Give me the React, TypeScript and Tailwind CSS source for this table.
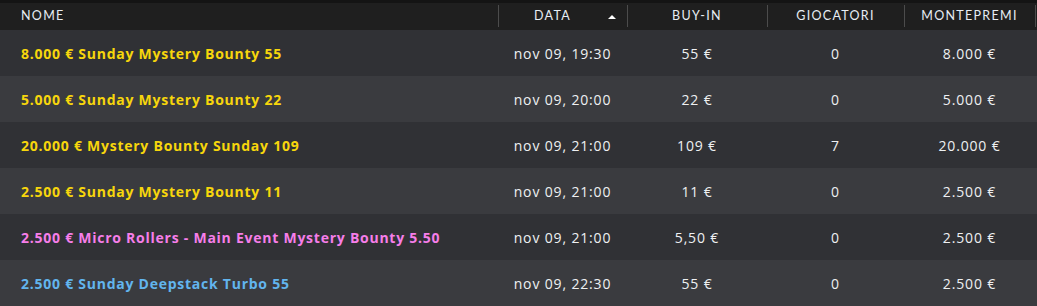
import React from 'react'

type Row = {
  name: string
  color: string
  date: string
  buyIn: string
  players: string
  prize: string
}

const rows: Row[] = [
  { name: '8.000 € Sunday Mystery Bounty 55', color: 'text-[#f7d60c]', date: 'nov 09, 19:30', buyIn: '55 €', players: '0', prize: '8.000 €' },
  { name: '5.000 € Sunday Mystery Bounty 22', color: 'text-[#f7d60c]', date: 'nov 09, 20:00', buyIn: '22 €', players: '0', prize: '5.000 €' },
  { name: '20.000 € Mystery Bounty Sunday 109', color: 'text-[#f7d60c]', date: 'nov 09, 21:00', buyIn: '109 €', players: '7', prize: '20.000 €' },
  { name: '2.500 € Sunday Mystery Bounty 11', color: 'text-[#f7d60c]', date: 'nov 09, 21:00', buyIn: '11 €', players: '0', prize: '2.500 €' },
  { name: '2.500 € Micro Rollers - Main Event Mystery Bounty 5.50', color: 'text-[#f67ee9]', date: 'nov 09, 21:00', buyIn: '5,50 €', players: '0', prize: '2.500 €' },
  { name: '2.500 € Sunday Deepstack Turbo 55', color: 'text-[#62b5ee]', date: 'nov 09, 22:30', buyIn: '55 €', players: '0', prize: '2.500 €' },
]

const cols = 'grid grid-cols-[498px_129px_140px_137px_131px_1fr]'

const HeadCell = ({ label, sep = true, children }: { label: string; sep?: boolean; children?: React.ReactNode }) => (
  <div className="relative flex h-full items-center justify-center">
    {sep && <span className="absolute left-0 top-[2px] h-[22px] w-px bg-[#4c4c4c]" />}
    <span>{label}</span>
    {children}
  </div>
)

export default function App() {
  return (
    <div className="h-[306px] w-[1037px] overflow-hidden bg-[#141414] pt-[3px]">
      <div className={`${cols} h-[27px] bg-[#1f1f1f] font-['Lato',sans-serif] text-[12.5px] tracking-[1.3px] text-[#e8eef4]`}>
        <div className="flex items-center pl-[21px]">NOME</div>
        <div className="relative flex h-full items-center justify-center pr-[20px]">
          <span className="absolute left-0 top-[2px] h-[22px] w-px bg-[#4c4c4c]" />
          <span>DATA</span>
          <svg className="absolute right-[11px] top-[12px]" width="8" height="4" viewBox="0 0 8 4">
            <polygon points="0,4 4,0 8,4" fill="#ffffff" />
          </svg>
        </div>
        <HeadCell label="BUY-IN" />
        <HeadCell label="GIOCATORI" />
        <HeadCell label="MONTEPREMI" />
        <div className="relative">
          <span className="absolute left-0 top-[2px] h-[22px] w-px bg-[#4c4c4c]" />
        </div>
      </div>
      {rows.map((r, i) => (
        <div
          key={i}
          className={`${cols} h-[46px] items-center font-['Open_Sans',sans-serif] text-[14px] ${i % 2 === 0 ? 'bg-[#303135]' : 'bg-[#3a3b3f]'}`}
        >
          <div className={`pl-[21px] font-bold tracking-[0.75px] ${r.color}`}>{r.name}</div>
          <div className="text-center tracking-[0.85px] text-[#eef0f2]">{r.date}</div>
          <div className="text-center tracking-[0.85px] text-[#eef0f2]">{r.buyIn}</div>
          <div className="text-center tracking-[0.85px] text-[#eef0f2]">{r.players}</div>
          <div className="text-center tracking-[0.85px] text-[#eef0f2]">{r.prize}</div>
          <div />
        </div>
      ))}
    </div>
  )
}
